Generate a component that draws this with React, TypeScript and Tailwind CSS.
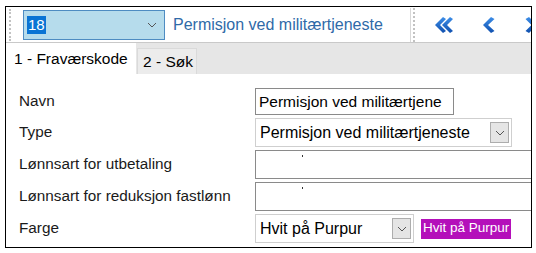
import React from 'react'

const font = { fontFamily: '"Liberation Sans", Arial, sans-serif' }

function Chevron({ className = '' }: { className?: string }) {
  return (
    <svg viewBox="0 0 10 6" className={className} fill="none" stroke="#555" strokeWidth="1">
      <path d="M1 1 L5 5 L9 1" />
    </svg>
  )
}

function DropButton() {
  return (
    <div className="flex h-[21px] w-[19px] items-center justify-center border border-[#adadad] bg-[#e5e5e5]">
      <Chevron className="h-[6px] w-[10px]" />
    </div>
  )
}

function BlueArrow({ kind }: { kind: 'first' | 'prev' | 'next' }) {
  return (
    <svg viewBox="0 0 20 20" className="h-[20px] w-[20px]">
      <defs>
        <linearGradient id="blueg" x1="0" y1="0" x2="0" y2="1">
          <stop offset="0" stopColor="#3d8ee8" />
          <stop offset="1" stopColor="#0f4fae" />
        </linearGradient>
      </defs>
      {kind === 'first' && (
        <>
          <path d="M9 2 L1 10 L9 18 L12 16 L6 10 L12 4 Z" fill="url(#blueg)" />
          <path d="M16 2 L8 10 L16 18 L19 16 L13 10 L19 4 Z" fill="url(#blueg)" />
        </>
      )}
      {kind === 'prev' && <path d="M12 2 L4 10 L12 18 L15.5 16 L9 10 L15.5 4 Z" fill="url(#blueg)" />}
      {kind === 'next' && <path d="M5 2 L13 10 L5 18 L1.5 16 L7.5 10 L1.5 4 Z" fill="url(#blueg)" />}
    </svg>
  )
}

function Row({ label, children }: { label: string; children: React.ReactNode }) {
  return (
    <div className="flex items-center">
      <div className="w-[236px] shrink-0 text-[15.3px] text-[#1a1a1a]">{label}</div>
      {children}
    </div>
  )
}

export default function App() {
  return (
    <div className="h-[253px] w-[536px] bg-white pl-[5px] pt-[6px]" style={font}>
      <div className="flex h-[242px] w-[527px] flex-col overflow-hidden border border-black">
        {/* toolbar */}
        <div className="flex h-[36px] shrink-0 items-center border-b border-[#c9c9c9] bg-white">
          <div className="ml-[3px] h-[32px] border-l-2 border-dotted border-[#c2c2c2]" />
          <div className="ml-[12px] flex h-[30px] w-[142px] shrink-0 items-center border border-[#4e8cc2] bg-[#b6dcec]">
            <span className="ml-[3px] bg-[#0a74d4] px-[1px] text-[15px] leading-[18px] text-white">18</span>
            <Chevron className="ml-auto mr-[7px] h-[6px] w-[10px]" />
          </div>
          <span className="ml-[8px] w-[234px] shrink-0 whitespace-nowrap text-[16px] text-[#2f6aa8]">
            Permisjon ved militærtjeneste
          </span>
          <div className="ml-[3px] h-[34px] border-l border-[#d8d8d8]" />
          <div className="ml-[2px] h-[34px] border-l-2 border-dotted border-[#c2c2c2]" />
          <div className="ml-[19px] shrink-0">
            <BlueArrow kind="first" />
          </div>
          <div className="ml-[25px] shrink-0">
            <BlueArrow kind="prev" />
          </div>
          <div className="ml-[25px] shrink-0">
            <BlueArrow kind="next" />
          </div>
        </div>
        {/* tabs */}
        <div className="flex h-[31px] shrink-0 items-end bg-[#e6e6e6]">
          <div className="flex h-[31px] w-[130px] items-center bg-white pl-[8px] text-[15.5px] text-black">
            1 - Fraværskode
          </div>
          <div className="ml-[1px] flex h-[26px] w-[60px] items-center border border-b-0 border-[#dadada] bg-[#ececec] pl-[5px] text-[15.5px] text-black">
            2 - Søk
          </div>
        </div>
        {/* form */}
        <div className="flex flex-1 flex-col gap-[3px] bg-white pl-[13px] pt-[14px]">
          <Row label="Navn">
            <div className="flex h-[27px] w-[199px] items-center overflow-hidden whitespace-nowrap border border-[#8a8a8a] pl-[3px] text-[15.5px] text-black">
              Permisjon ved militærtjene
            </div>
          </Row>
          <Row label="Type">
            <div className="flex h-[29px] w-[257px] items-center whitespace-nowrap border border-[#cfcfcf] pl-[4px] pr-[2px] text-[16px] text-black">
              <span>Permisjon ved militærtjeneste</span>
              <div className="ml-auto">
                <DropButton />
              </div>
            </div>
          </Row>
          <Row label="Lønnsart for utbetaling">
            <div className="relative h-[29px] w-[300px] shrink-0 border border-[#8a8a8a]">
              <div className="absolute left-[46px] top-[4px] h-[2px] w-[1px] bg-[#333]" />
            </div>
          </Row>
          <Row label="Lønnsart for reduksjon fastlønn">
            <div className="relative h-[29px] w-[300px] shrink-0 border border-[#8a8a8a]">
              <div className="absolute left-[46px] top-[4px] h-[2px] w-[1px] bg-[#333]" />
            </div>
          </Row>
          <Row label="Farge">
            <div className="flex h-[29px] w-[159px] shrink-0 items-center whitespace-nowrap border border-[#cfcfcf] pl-[4px] pr-[2px] text-[16px] text-black">
              <span>Hvit på Purpur</span>
              <div className="ml-auto">
                <DropButton />
              </div>
            </div>
            <div className="ml-[7px] flex h-[20px] shrink-0 items-center whitespace-nowrap bg-[#b40fba] px-[2px] text-[13.5px] text-white">
              Hvit på Purpur
            </div>
          </Row>
        </div>
      </div>
    </div>
  )
}
